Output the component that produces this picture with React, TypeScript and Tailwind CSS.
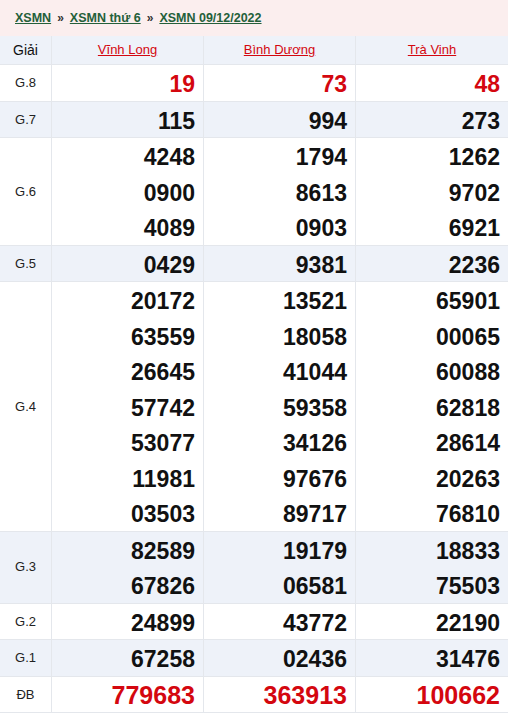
import React from "react";

type Row = { label: string; vals: string[][]; alt: boolean; red?: boolean };

const rows: Row[] = [
  { label: "G.8", vals: [["19"], ["73"], ["48"]], alt: false, red: true },
  { label: "G.7", vals: [["115"], ["994"], ["273"]], alt: true },
  {
    label: "G.6",
    vals: [
      ["4248", "0900", "4089"],
      ["1794", "8613", "0903"],
      ["1262", "9702", "6921"],
    ],
    alt: false,
  },
  { label: "G.5", vals: [["0429"], ["9381"], ["2236"]], alt: true },
  {
    label: "G.4",
    vals: [
      ["20172", "63559", "26645", "57742", "53077", "11981", "03503"],
      ["13521", "18058", "41044", "59358", "34126", "97676", "89717"],
      ["65901", "00065", "60088", "62818", "28614", "20263", "76810"],
    ],
    alt: false,
  },
  {
    label: "G.3",
    vals: [
      ["82589", "67826"],
      ["19179", "06581"],
      ["18833", "75503"],
    ],
    alt: true,
  },
  { label: "G.2", vals: [["24899"], ["43772"], ["22190"]], alt: false },
  { label: "G.1", vals: [["67258"], ["02436"], ["31476"]], alt: true },
  { label: "ĐB", vals: [["779683"], ["363913"], ["100662"]], alt: false, red: true },
];

export default function App() {
  return (
    <div
      className="w-[508px] h-[713px] overflow-hidden bg-white"
      style={{ fontFamily: "'Liberation Sans', Arial, sans-serif" }}
    >
      <div className="h-[36px] bg-[#fbeeee] flex items-center pl-[15px] text-[12.5px] font-bold text-[#24603a]">
        <a className="underline">XSMN</a>
        <span className="mx-[6px] text-[#333] font-bold text-[12px]">»</span>
        <a className="underline">XSMN thứ 6</a>
        <span className="mx-[6px] text-[#333] font-bold text-[12px]">»</span>
        <a className="underline">XSMN 09/12/2022</a>
      </div>
      <div className="grid grid-cols-[52px_1fr_1fr_1fr] h-[29px] bg-[#eef2f9] border-b border-[#e4e7ec]">
        <div className="flex items-center justify-center text-[14px] text-[#111] border-r border-[#e4e7ec]">Giải</div>
        <div className="flex items-center justify-center text-[13px] text-[#d4070f] underline border-r border-[#e4e7ec]">Vĩnh Long</div>
        <div className="flex items-center justify-center text-[13px] text-[#d4070f] underline border-r border-[#e4e7ec]">Bình Dương</div>
        <div className="flex items-center justify-center text-[13px] text-[#d4070f] underline">Trà Vinh</div>
      </div>
      {rows.map((r) => (
        <div
          key={r.label}
          className={`grid grid-cols-[52px_1fr_1fr_1fr] border-b border-[#e4e7ec] ${r.alt ? "bg-[#eef2f9]" : "bg-white"}`}
        >
          <div className="flex items-center justify-center text-[13px] text-[#222] border-r border-[#e4e7ec]">
            {r.label}
          </div>
          {r.vals.map((col, ci) => (
            <div
              key={ci}
              className={`flex flex-col ${ci < 2 ? "border-r border-[#e4e7ec]" : ""}`}
            >
              {col.map((v, vi) => (
                <div
                  key={vi}
                  className={`h-[35.5px] pt-[3px] flex items-center justify-end pr-[8px] font-bold ${
                    r.label === "ĐB" ? "text-[25px]" : "text-[23px]"
                  } ${r.red ? "text-[#d4070f]" : "text-[#111]"}`}
                >
                  {v}
                </div>
              ))}
            </div>
          ))}
        </div>
      ))}
    </div>
  );
}
